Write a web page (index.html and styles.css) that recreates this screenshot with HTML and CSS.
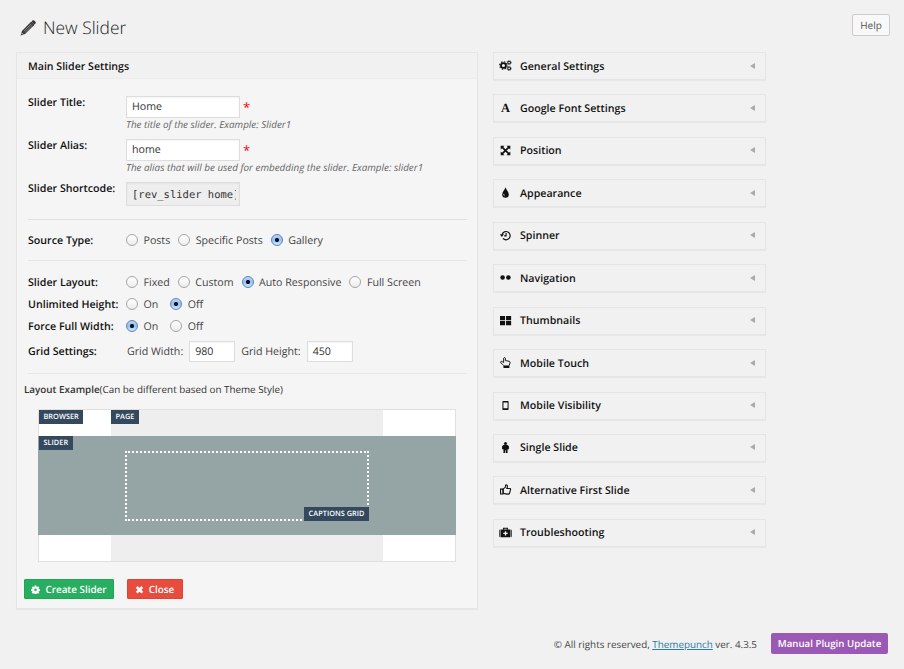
FILE: index.html
```html
<!DOCTYPE html>
<html lang="en">
<head>
<meta charset="utf-8">
<title>New Slider</title>
<link rel="stylesheet" href="styles.css">
</head>
<body>
<header class="top">
  <svg class="pencil" viewBox="0 0 16 16"><path d="M.6 15.4 1.9 10.9 10.8 2a1 1 0 0 1 1.4 0l1.8 1.8a1 1 0 0 1 0 1.4L5.1 14.1Z" fill="#3c3c3c"/><path d="M11.6 1.3 12.4.6a1.3 1.3 0 0 1 1.8 0l1.2 1.2a1.3 1.3 0 0 1 0 1.8l-.8.8Z" fill="#333"/><path d="M4 11.1 11.3 3.8M5.200 12.200 12.400 5" stroke="#999" stroke-width=".8"/><path d="M1.600 13 2.900 14.300" stroke="#f1f1f1" stroke-width="1"/></svg>
  <h1>New Slider</h1>
  <button class="help">Help</button>
</header>
<main class="cols">
  <section class="panel">
    <h2 class="panel-head">Main Slider Settings</h2>
    <div class="row r-field"><label>Slider Title:</label><div class="ctl"><span class="input">Home</span><span class="req">*</span></div><p>The title of the slider. Example: Slider1</p></div>
    <div class="row r-field"><label>Slider Alias:</label><div class="ctl"><span class="input">home</span><span class="req">*</span></div><p>The alias that will be used for embedding the slider. Example: slider1</p></div>
    <div class="row r-code"><label>Slider Shortcode:</label><div class="ctl"><span class="input code"><span>[rev_slider home]</span></span></div></div>
    <hr>
    <div class="row r-source"><label>Source Type:</label><div class="opts"><span class="opt"><i></i>Posts</span><span class="opt"><i></i>Specific Posts</span><span class="opt on"><i></i>Gallery</span></div></div>
    <hr class="soft">
    <div class="row r-layout"><label>Slider Layout:</label><div class="opts"><span class="opt"><i></i>Fixed</span><span class="opt"><i></i>Custom</span><span class="opt on"><i></i>Auto Responsive</span><span class="opt"><i></i>Full Screen</span></div></div>
    <div class="row r-opt"><label>Unlimited Height:</label><div class="opts pair"><span class="opt"><i></i>On</span><span class="opt on"><i></i>Off</span></div></div>
    <div class="row r-opt"><label>Force Full Width:</label><div class="opts pair"><span class="opt on"><i></i>On</span><span class="opt"><i></i>Off</span></div></div>
    <div class="row r-grid"><label>Grid Settings:</label><div class="ctl"><span class="gl">Grid Width:</span><span class="input num">980</span><span class="gl second">Grid Height:</span><span class="input num">450</span></div></div>
    <hr class="soft">
    <p class="example"><b>Layout Example</b>(Can be different based on Theme Style)</p>
    <div class="browser">
      <span class="tag">BROWSER</span>
      <div class="page"><span class="tag">PAGE</span></div>
      <div class="slider"><span class="tag">SLIDER</span><div class="captions"><span class="tag">CAPTIONS GRID</span></div></div>
    </div>
    <div class="actions">
      <button class="btn green"><svg viewBox="0 0 16 16"><path fill="#fff" fill-rule="evenodd" d="M6.500 1h3l.4 2.100 1 .4 1.800-1.200 2 2-1.200 1.800.4 1 2.100.4v3l-2.100.4-.4 1 1.200 1.800-2 2-1.800-1.200-1 .4-.4 2.100h-3l-.4-2.100-1-.4-1.800 1.200-2-2 1.200-1.800-.4-1L0 10.500v-3l2.100-.4.4-1-1.200-1.800 2-2 1.800 1.200 1-.4ZM8 6.200a2.300 2.300 0 1 0 0 4.600 2.300 2.300 0 0 0 0-4.600Z"/></svg>Create Slider</button>
      <button class="btn red"><svg viewBox="0 0 16 16"><path d="m3 3.500 10 10m0-10-10 10" stroke="#fff" stroke-width="4.600"/></svg>Close</button>
    </div>
  </section>
  <aside class="side">
    <div class="box"><svg viewBox="0 0 18 16"><circle cx="6" cy="8" r="3.600" fill="none" stroke="#111" stroke-width="2.600"/><circle cx="6" cy="8" r="5.500" fill="none" stroke="#111" stroke-width="1.500" stroke-dasharray="2.200 2.120"/><circle cx="14.300" cy="3.700" r="2" fill="none" stroke="#111" stroke-width="1.500"/><circle cx="14.300" cy="3.700" r="3.100" fill="none" stroke="#111" stroke-width=".9" stroke-dasharray="1.200 1.230"/><circle cx="14.300" cy="12.300" r="2" fill="none" stroke="#111" stroke-width="1.500"/><circle cx="14.300" cy="12.300" r="3.100" fill="none" stroke="#111" stroke-width=".9" stroke-dasharray="1.200 1.230"/></svg><span>General Settings</span><em></em></div>
    <div class="box"><b class="glyph">A</b><span>Google Font Settings</span><em></em></div>
    <div class="box"><svg viewBox="0 0 18 16"><path d="M2 1h5.500L2 6.500ZM16 1v5.500L10.500 1ZM2 15V9.500L7.500 15ZM16 15h-5.500L16 9.500Z" fill="#111"/><path d="m4 3 10 10M14 3 4 13" stroke="#111" stroke-width="2.500"/></svg><span>Position</span><em></em></div>
    <div class="box"><svg viewBox="0 0 18 16"><path d="M9 .5C9.800 4.300 13.800 7 13.800 10.900a4.800 4.800 0 0 1-9.600 0C4.200 7 8.200 4.300 9 .5Z" fill="#111"/><path d="M6.700 10q-1 2 1 2.800" stroke="#ddd" stroke-width="1.300" fill="none"/></svg><span>Appearance</span><em></em></div>
    <div class="box"><svg viewBox="0 0 18 16"><path d="M4 6.500A6 6 0 1 1 5.300 12.300M9.800 4.500v4H7" fill="none" stroke="#111" stroke-width="1.700"/><path d="M.8 6h6L3.700 10Z" fill="#111"/></svg><span>Spinner</span><em></em></div>
    <div class="box"><svg viewBox="0 0 18 16"><circle cx="4.800" cy="8" r="3.300" fill="#111"/><circle cx="13.200" cy="8" r="3.300" fill="#111"/></svg><span>Navigation</span><em></em></div>
    <div class="box"><svg viewBox="0 0 18 16"><path d="M1 1.500h7.400v6H1ZM9.800 1.500h7.400v6H9.800ZM1 8.900h7.400v6H1ZM9.800 8.900h7.400v6H9.800Z" fill="#111"/></svg><span>Thumbnails</span><em></em></div>
    <div class="box"><svg viewBox="0 0 18 16"><path d="M6.500 12.500C5 11 4.300 10 2.200 8.500 1.200 7 2.600 5.700 4.200 6.600L6.300 8V1.800q1.300-1.900 2.600 0v3.400l5.400 1q1.700.6 1.400 2.400L14.200 12.500" fill="none" stroke="#111" stroke-width="1.400"/><path d="M6 12.300h8.700V16H6Z" fill="#111"/></svg><span>Mobile Touch</span><em></em></div>
    <div class="box"><svg viewBox="0 0 18 16"><path fill="#111" fill-rule="evenodd" d="M5.500 1.500h7q1 0 1 1v11q0 1-1 1h-7q-1 0-1-1v-11q0-1 1-1ZM6 3.500v8.500h6V3.500Z"/></svg><span>Mobile Visibility</span><em></em></div>
    <div class="box"><svg viewBox="0 0 18 16"><circle cx="9" cy="2.300" r="2.200" fill="#111"/><path d="M6 4.500h6l2 1.500v4.500h-2V16H9.500v-4h-1v4H6v-5.500H4V6Z" fill="#111"/></svg><span>Single Slide</span><em></em></div>
    <div class="box"><svg viewBox="0 0 18 16"><path d="M5.500 7.500 9 4.500V2q1-1.500 2.500 0 .8 1.800-.5 4.500h4.500q1.300.5.700 2l-1.400 5q-.4 1.200-1.800 1.200-4 0-7.500-1.200Z" fill="none" stroke="#111" stroke-width="1.600"/><path d="M1.800 7.500h3.700v7H1.800Z" fill="none" stroke="#111" stroke-width="1.600"/></svg><span>Alternative First Slide</span><em></em></div>
    <div class="box"><svg viewBox="0 0 18 16"><path d="M6.200 4V1.800h5.600V4" fill="none" stroke="#111" stroke-width="1.700"/><path d="M0 5q0-1.500 1.500-1.500V15Q0 15 0 13.500ZM18 5q0-1.500-1.500-1.500V15Q18 15 18 13.500ZM2.200 3.500h13.600V15H2.200Z" fill="#111"/><path d="M9 6v6.500M5.800 9.300h6.400" stroke="#f1f1f1" stroke-width="2"/></svg><span>Troubleshooting</span><em></em></div>
  </aside>
</main>
<footer class="foot"><span>© All rights reserved, <a>Themepunch</a> ver. 4.3.5</span><button class="btn purple">Manual Plugin Update</button></footer>
</body>
</html>
```
FILE: styles.css
```css
* { box-sizing: border-box; }
body { margin: 0; width: 904px; height: 669px; overflow: hidden; background: #f1f1f1; color: #444; font: 10.65px/16px "Open Sans", sans-serif; text-rendering: geometricPrecision; }
h1, h2, p { margin: 0; }
button { font: inherit; text-rendering: inherit; }
.top { display: flex; align-items: flex-start; height: 52px; padding: 0 14px 0 20px; }
.pencil { width: 16px; height: 16px; margin-top: 20px; }
h1 { margin: 16px auto 0 7px; font-size: 17.4px; line-height: 25px; font-weight: 300; color: #222; }
.help { width: 38px; height: 22px; margin-top: 14px; padding: 0; background: #f8f8f8; border: 1px solid #ccc; border-radius: 2px; font-size: 10px; color: #555; }
.cols { display: flex; gap: 15px; height: 569px; padding-left: 16px; align-items: flex-start; }
.panel { width: 462px; height: 557px; background: #f5f5f5; border: 1px solid #e5e5e5; box-shadow: 0 1px 1px rgba(0,0,0,.04); }
.panel-head { height: 26px; padding: 1px 0 0 11px; background: #f1f1f1; border-bottom: 1px solid #ececec; font-size: 10.6px; line-height: 26px; font-weight: 600; color: #111; margin-bottom: 17px; }
.row { display: grid; grid-template-columns: 98px 1fr; margin-left: 11px; }
.row label { padding-top: 1px; font-weight: 600; color: #111; white-space: nowrap; line-height: 12px; }
.ctl, .opts { display: flex; align-items: center; }
.r-field { height: 43px; grid-template-rows: 21px 15px; }
.r-field p { grid-column: 2; font-size: 9.850px; font-style: italic; line-height: 15px; color: #666; white-space: nowrap; }
.input { width: 114px; height: 22px; padding-left: 5px; background: #fff; border: 1px solid #ddd; box-shadow: inset 0 1px 2px rgba(0,0,0,.05); line-height: 21px; color: #333; }
.req { margin-left: 3px; color: #f00; font-size: 13px; line-height: 16px; }
.code { height: 24px; padding-right: 3px; background: #eee; font: 10.500px/24px "DejaVu Sans Mono", monospace; }
.code span { display: block; height: 22px; overflow: hidden; white-space: nowrap; }
.r-code { height: 37px; align-items: start; }
hr { width: 439px; height: 1px; margin: 0 0 0 11px; border: 0; background: #dfdfdf; }
hr.soft { background: #e6e6e6; }
.r-source { height: 40px; align-items: center; }
.r-layout { height: 32px; align-items: end; padding-bottom: 4px; }
.r-opt { height: 22px; align-items: center; }
.r-grid { height: 36px; padding-top: 4px; align-items: start; }
.r-grid label { line-height: 20px; }
.opts { gap: 8px; }
.pair { gap: 12px; }
.opt { display: flex; align-items: center; gap: 5.500px; line-height: 14px; height: 14px; padding-top: 2px; white-space: nowrap; }
.opt i { width: 12px; height: 12px; margin-top: -2px; border: 1px solid #a5a5a5; border-radius: 50%; background: linear-gradient(#fff, #ececec); }
.opt.on i { border-color: #6480b4; background: radial-gradient(circle, #112 0 1.800px, transparent 2.400px), linear-gradient(#b8d5f5, #8fc3f6 50%, #c4ecff); }
.gl { margin: 0 6px 0 1px; white-space: nowrap; }
.gl.second { margin-left: 6px; }
.input.num { width: 46px; height: 21px; line-height: 20px; }
.example { margin: 7px 0 12px 7px; font-size: 9.850px; line-height: 16px; color: #333; }
.example b { font-weight: 600; }
.browser { display: grid; width: 418px; height: 153px; margin-left: 21px; grid-template: 26px 99px 1fr / 72px 272px 1fr; background: #fff; border: 1px solid #e0e0e0; }
.tag { height: 14px; padding: 0 4.500px; background: #34495e; color: #fff; font-size: 7.400px; line-height: 15px; font-weight: 600; justify-self: start; align-self: start; white-space: nowrap; }
.page { grid-area: 1 / 2 / 4 / 3; background: #eee; display: grid; }
.slider { grid-area: 2 / 1 / 3 / 4; display: grid; grid-template-columns: 86px 244px; background: #95a5a6; margin: 0 -1px; padding-left: 1px; }
.captions { display: grid; height: 70px; margin-top: 15px; border: 2px dotted #fff; }
.captions .tag { align-self: end; justify-self: end; margin: 0 -2px -2px 0; }
.actions { display: flex; gap: 12.500px; margin: 17px 0 0 7px; }
.btn { display: flex; align-items: center; justify-content: center; height: 20px; padding: 0; border: 0; border-radius: 2px; color: #fff; font-weight: 600; font-size: 9.900px; white-space: nowrap; }
.btn svg { width: 9px; height: 9px; margin-right: 5px; }
.green { width: 90px; background: #27ae60; box-shadow: inset 0 0 0 1px #20a557; }
.red { width: 56px; background: #e74c3c; box-shadow: inset 0 0 0 1px #dc4536; }
.purple { width: 117px; height: 21px; background: #9b59b6; font-size: 9.700px; }
.side { display: flex; flex-direction: column; gap: 14.450px; width: 273px; }
.box { display: flex; align-items: center; height: 28px; padding: 0 10px 1px 5px; border: 1px solid #e5e5e5; box-shadow: 0 1px 1px rgba(0,0,0,.04); font-weight: 600; color: #111; }
.box span { padding-top: 2px; }
.box svg { width: 13px; height: 11px; margin-right: 8px; }
.glyph { width: 13px; margin-right: 8px; text-align: center; font: bold 12.500px/12px "Liberation Serif", serif; }
.box em { margin-left: auto; border: solid transparent; border-width: 3px 5px 3px 0; border-right-color: #aaa; }
.foot { display: flex; align-items: center; justify-content: flex-end; gap: 14px; height: 21px; margin-top: 12px; padding-right: 16px; font-size: 9.850px; }
.foot a { color: #2a7ba8; text-decoration: underline; }
```
